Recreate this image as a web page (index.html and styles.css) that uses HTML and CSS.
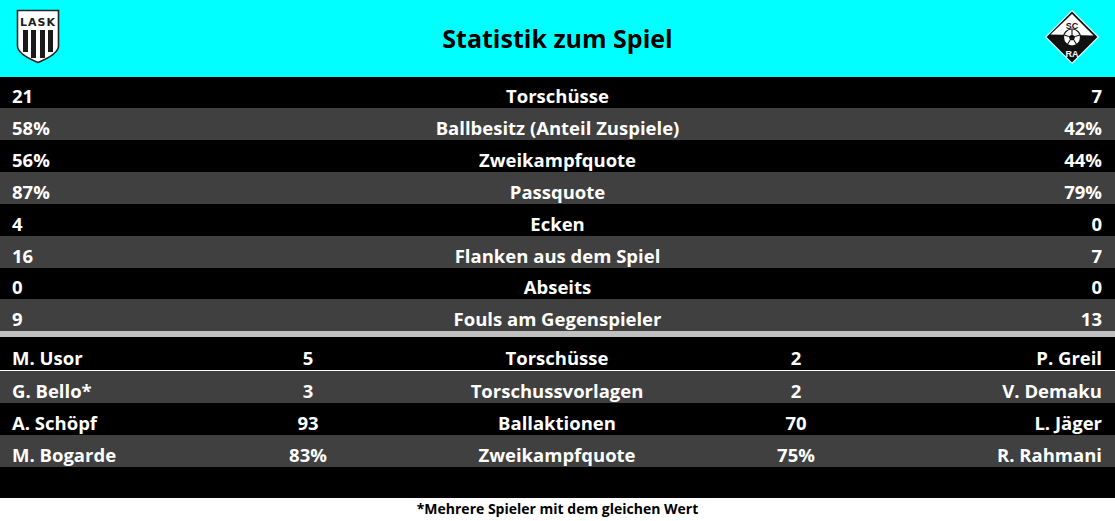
FILE: index.html
```html
<!DOCTYPE html>
<html lang="de">
<head>
<meta charset="utf-8">
<title>Statistik zum Spiel</title>
<link rel="stylesheet" href="styles.css">
</head>
<body>
<div class="page">
  <header class="head">
    <div class="logo logo-left">
      <svg width="44" height="55" viewBox="0 0 44 55" aria-label="LASK">
        <path d="M1.5 1.5 H42.5 V37 Q42.5 45 22 53.5 Q1.5 45 1.5 37 Z" fill="#fff" stroke="#222" stroke-width="1.6"/>
        <text x="22" y="17" text-anchor="middle" class="lask-txt">LASK</text>
        <g fill="#1a1a1a">
          <rect x="7" y="21" width="5" height="22"/>
          <rect x="15" y="21" width="5" height="28"/>
          <rect x="24" y="21" width="5" height="28"/>
          <rect x="32" y="21" width="5" height="22"/>
        </g>
      </svg>
    </div>
    <h1 class="title">Statistik zum Spiel</h1>
    <div class="logo logo-right">
      <svg width="56" height="56" viewBox="0 0 56 56" aria-label="SC RA">
        <polygon points="28,1 55,28 28,55 1,28" fill="#fff"/>
        <polygon points="28,2.5 53.5,28 28,53.5 2.5,28" fill="#111"/>
        <polygon points="28,5 49.5,26.5 6.5,25.5" fill="#fff"/>
        <text x="28" y="19.5" text-anchor="middle" class="sc-txt">SC</text>
        <text x="28" y="48" text-anchor="middle" class="ra-txt">RA</text>
        <circle cx="28" cy="28.5" r="8.5" fill="#fff" stroke="#111" stroke-width="1.2"/>
        <polygon points="28,25.3 31.2,27.6 30,31.3 26,31.3 24.8,27.6" fill="#111"/>
        <path d="M28 25.3 V20.5 M31.2 27.6 L35.8 26 M30 31.3 L32.6 35.5 M26 31.3 L23.4 35.5 M24.8 27.6 L20.2 26" stroke="#111" stroke-width="1.1"/>
      </svg>
    </div>
  </header>

  <section class="team">
    <div class="row dark r-first"><span class="v-l">21</span><span class="lbl">Torschüsse</span><span class="v-r">7</span></div>
    <div class="row grey"><span class="v-l">58%</span><span class="lbl">Ballbesitz (Anteil Zuspiele)</span><span class="v-r">42%</span></div>
    <div class="row dark"><span class="v-l">56%</span><span class="lbl">Zweikampfquote</span><span class="v-r">44%</span></div>
    <div class="row grey"><span class="v-l">87%</span><span class="lbl">Passquote</span><span class="v-r">79%</span></div>
    <div class="row dark"><span class="v-l">4</span><span class="lbl">Ecken</span><span class="v-r">0</span></div>
    <div class="row grey"><span class="v-l">16</span><span class="lbl">Flanken aus dem Spiel</span><span class="v-r">7</span></div>
    <div class="row dark r-short"><span class="v-l">0</span><span class="lbl">Abseits</span><span class="v-r">0</span></div>
    <div class="row grey"><span class="v-l">9</span><span class="lbl">Fouls am Gegenspieler</span><span class="v-r">13</span></div>
  </section>

  <div class="sep"></div>

  <section class="players">
    <div class="prow dark p-first"><span class="n-l">M. Usor</span><span class="pv">5</span><span class="lbl">Torschüsse</span><span class="pv">2</span><span class="n-r">P. Greil</span></div>
    <div class="prow grey"><span class="n-l">G. Bello*</span><span class="pv">3</span><span class="lbl">Torschussvorlagen</span><span class="pv">2</span><span class="n-r">V. Demaku</span></div>
    <div class="prow dark"><span class="n-l">A. Schöpf</span><span class="pv">93</span><span class="lbl">Ballaktionen</span><span class="pv">70</span><span class="n-r">L. Jäger</span></div>
    <div class="prow grey"><span class="n-l">M. Bogarde</span><span class="pv">83%</span><span class="lbl">Zweikampfquote</span><span class="pv">75%</span><span class="n-r">R. Rahmani</span></div>
    <div class="blank"></div>
  </section>

  <p class="note">*Mehrere Spieler mit dem gleichen Wert</p>
</div>
</body>
</html>
```

FILE: styles.css
```css
html, body {
  margin: 0;
  padding: 0;
  background: #ffffff;
}

.page {
  width: 1115px;
  font-family: "Open Sans", "Liberation Sans", sans-serif;
  font-weight: 700;
}

.head {
  height: 77px;
  background: #00ffff;
  display: grid;
  grid-template-columns: 1fr auto 1fr;
  align-items: start;
}

.logo-left {
  padding: 9px 0 0 16px;
}

.logo-right {
  justify-self: end;
  padding: 9px 15px 0 0;
}

.logo svg {
  display: block;
}

.lask-txt {
  font-family: "DejaVu Sans", sans-serif;
  font-weight: 700;
  font-size: 11px;
  letter-spacing: 1px;
  fill: #1a1a1a;
}

.sc-txt {
  font-family: "Liberation Sans", sans-serif;
  font-weight: 700;
  font-size: 9px;
  fill: #111;
}

.ra-txt {
  font-family: "Liberation Sans", sans-serif;
  font-weight: 700;
  font-size: 9px;
  fill: #fff;
}

.title {
  margin: 0;
  padding-top: 20px;
  font-size: 25px;
  line-height: 36px;
  font-weight: 700;
  color: #000;
}

.dark { background: #000000; }
.grey { background: #404040; }

.row, .prow {
  box-sizing: border-box;
  height: 32px;
  color: #ffffff;
  font-size: 18.5px;
  line-height: 26px;
  padding-top: 7px;
  white-space: nowrap;
}

.row {
  display: grid;
  grid-template-columns: 1fr auto 1fr;
}

.row.r-first { height: 31px; padding-top: 6px; }
.row.r-short { height: 31px; padding-top: 6px; }

.v-l { padding-left: 12px; }
.v-r { text-align: right; padding-right: 13px; }
.lbl { text-align: center; }

.sep {
  height: 6px;
  background: #c0c0c0;
}

.prow {
  display: grid;
  grid-template-columns: 248px 120px 378px 100px 1fr;
}

.prow.p-first {
  height: 34px;
  padding-top: 8px;
  border-bottom: 1px solid #ffffff;
}

.n-l { padding-left: 12px; }
.n-r { text-align: right; padding-right: 13px; }
.pv { text-align: center; }

.blank {
  height: 31px;
  background: #000;
}

.note {
  margin: 0;
  height: 23px;
  text-align: center;
  font-size: 14px;
  line-height: 22px;
  color: #000;
}
```
